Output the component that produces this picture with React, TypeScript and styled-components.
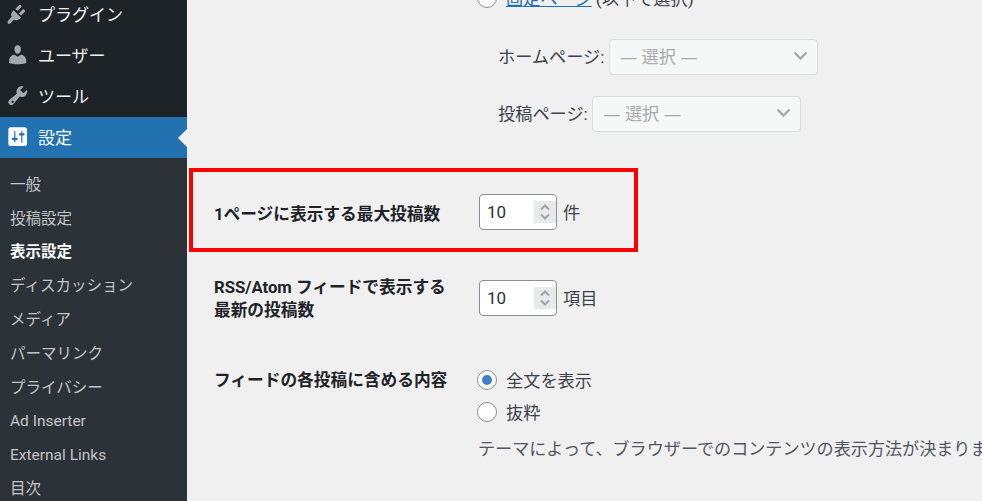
import React from 'react';
import styled, { createGlobalStyle } from 'styled-components';

const GlobalStyle = createGlobalStyle`
	html, body {
		margin: 0;
		height: 100%;
		overflow: hidden;
		background: #f0f0f1;
	}
	body {
		font-family: Roboto, 'Noto Sans CJK JP', sans-serif;
		font-size: 17.2px;
		color: #3c434a;
	}
`;

const Page = styled.div`
	display: flex;
	width: 982px;
	height: 501px;
	overflow: hidden;
`;

const Sidebar = styled.nav`
	flex: 0 0 187px;
	display: flex;
	flex-direction: column;
	background: #1d2327;
	overflow: hidden;
`;

const MenuItem = styled.div<{ $current?: boolean }>`
	position: relative;
	flex: 0 0 41px;
	display: flex;
	align-items: center;
	gap: 9px;
	padding-left: 5.5px;
	font-size: 17px;
	background: ${(p) => (p.$current ? '#2271b1' : 'transparent')};
	color: ${(p) => (p.$current ? '#fff' : '#f0f0f1')};
	&:first-child {
		margin-top: -6px;
	}
	${(p) =>
		p.$current &&
		`&::after {
			content: '';
			position: absolute;
			right: 0;
			top: 12px;
			border: 9px solid transparent;
			border-right-color: #f0f0f1;
			border-left-width: 0;
		}`}
`;

const MenuLabel = styled.span`
	position: relative;
	top: -1px;
`;

const MenuIcon = styled.svg<{ $current?: boolean }>`
	flex: 0 0 23.4px;
	width: 23.4px;
	height: 23.4px;
	margin-top: -2px;
	fill: ${(p) => (p.$current ? '#fff' : '#a7aaad')};
`;

const SubMenu = styled.div`
	flex: 1;
	display: flex;
	flex-direction: column;
	padding-top: 11px;
	background: #2c3338;
`;

const SubItem = styled.div<{ $current?: boolean }>`
	flex: 0 0 33.8px;
	box-sizing: border-box;
	display: flex;
	align-items: center;
	padding: 0 0 2px 10px;
	font-size: 15.5px;
	line-height: 20px;
	font-weight: ${(p) => (p.$current ? 700 : 400)};
	color: ${(p) => (p.$current ? '#fff' : '#c3c4c7')};
	white-space: nowrap;
`;

const Content = styled.main`
	flex: 1;
	min-width: 0;
	display: flex;
	flex-direction: column;
	padding: 0 0 0 27px;
	overflow: hidden;
`;

const FrontPageOptions = styled.div`
	padding-left: 263px;
`;

const RadioRow = styled.label<{ $clipped?: boolean }>`
	display: flex;
	align-items: center;
	gap: 9px;
	height: 32px;
	margin-top: ${(p) => (p.$clipped ? '-18px' : '0')};
	white-space: nowrap;
`;

const RadioText = styled.span`
	position: relative;
	top: -1px;
`;

const Radio = styled.span<{ $checked?: boolean }>`
	flex: 0 0 20px;
	height: 20px;
	box-sizing: border-box;
	border: 1px solid #8c8f94;
	border-radius: 50%;
	background: #fff;
	display: flex;
	align-items: center;
	justify-content: center;
	&::before {
		content: '';
		display: ${(p) => (p.$checked ? 'block' : 'none')};
		width: 10px;
		height: 10px;
		border-radius: 50%;
		background: #3f7fc1;
	}
`;

const Link = styled.a`
	color: #2271b1;
	text-decoration: underline;
`;

const PageSelects = styled.div`
	display: flex;
	flex-direction: column;
	gap: 21px;
	margin: 25px 0 0 21px;
`;

const SelectRow = styled.label`
	display: flex;
	align-items: center;
	height: 36px;
	white-space: nowrap;
`;

const SelectLabel = styled.span`
	position: relative;
	top: -2px;
	margin-right: 4.5px;
`;

const Select = styled.div`
	width: 209px;
	height: 36px;
	box-sizing: border-box;
	display: flex;
	align-items: center;
	justify-content: space-between;
	padding: 0 9px 3px 10px;
	font-family: 'Open Sans', 'Noto Sans CJK JP', sans-serif;
	background: #f6f7f7;
	border: 1px solid #dcdcde;
	border-radius: 4px;
	color: #a7aaad;
`;

const Chevron = styled.svg`
	width: 15px;
	height: 15px;
	fill: none;
	stroke: #a7aaad;
	stroke-width: 2.4;
`;

const SettingRow = styled.section<{ $marked?: boolean; $gap: number }>`
	position: relative;
	display: grid;
	grid-template-columns: 265px 1fr;
	align-items: start;
	margin-top: ${(p) => p.$gap}px;
	${(p) =>
		p.$marked &&
		`&::after {
			content: '';
			position: absolute;
			left: -25px;
			top: -26px;
			width: 449px;
			height: 84px;
			box-sizing: border-box;
			border: 4px solid #fe0000;
		}`}
`;

const RowLabel = styled.div<{ $shift: number }>`
	position: relative;
	top: ${(p) => p.$shift}px;
	font-size: 16.7px;
	font-weight: 700;
	color: #1d2327;
	line-height: 23px;
	white-space: nowrap;
`;

const Inline = styled.div`
	display: flex;
	align-items: center;
	gap: 6px;
`;

const Unit = styled.span`
	position: relative;
	top: -1px;
`;

const NumberBox = styled.div`
	position: relative;
	width: 78px;
	height: 36px;
	box-sizing: border-box;
	display: flex;
	align-items: center;
	padding-left: 7px;
	font-size: 17px;
	background: #fff;
	border: 1px solid #8c8f94;
	border-radius: 4px;
	color: #2c3338;
`;

const Spinner = styled.svg`
	position: absolute;
	right: 0;
	top: 6px;
	width: 22px;
	height: 22px;
	background: #e8e9ea;
	fill: none;
	stroke: #a0a3a7;
	stroke-width: 2;
`;

const Options = styled.div`
	display: flex;
	flex-direction: column;
	margin-left: -2px;
`;

const Hint = styled.p`
	margin: 7px 0 0 1px;
	font-size: 17.1px;
	white-space: nowrap;
	color: #50575e;
`;

function NumberField() {
	return (
		<NumberBox>
			10
			<Spinner viewBox="0 0 22 22">
				<path d="M7 8.500 11 4.500 15 8.500M7 13.500 11 17.500 15 13.500" />
			</Spinner>
		</NumberBox>
	);
}

function PageSelect({ label }: { label: string }) {
	return (
		<SelectRow>
			<SelectLabel>{label}</SelectLabel>
			<Select>
				— 選択 —
				<Chevron viewBox="0 0 15 15">
					<path d="M1.500 4.500 7.500 10.500 13.500 4.500" />
				</Chevron>
			</Select>
		</SelectRow>
	);
}

export default function App() {
	return (
		<>
			<GlobalStyle />
			<Page>
				<Sidebar>
					<MenuItem>
						<MenuIcon viewBox="0 0 20 20">
							<path d="M13.110 4.360 9.870 7.600 8 5.730l3.240-3.240c.35-.34 1.050-.25 1.540.24.49.49.58 1.190.33 1.630zM16.110 8.360 12.870 11.600 11 9.730l3.240-3.240c.35-.34 1.050-.25 1.540.24.49.49.58 1.190.33 1.630zM6.500 7l6.500 6.500c-2 2-4.500 2.800-6.200 1.600L3.500 18.500h-2v-2l3.400-3.800C3.700 11 4.500 9 6.500 7z" />
						</MenuIcon>
						<MenuLabel>プラグイン</MenuLabel>
					</MenuItem>
					<MenuItem>
						<MenuIcon viewBox="0 0 20 20">
							<path d="M10 9.250c-2.270 0-2.730-3.440-2.730-3.440C7 4.020 7.820 2 9.970 2c2.160 0 2.980 2.020 2.710 3.810 0 0-.41 3.440-2.680 3.440zm0 2.570L12.720 10c2.390 0 4.520 2.330 4.520 4.530v2.490s-3.650 1.130-7.240 1.130c-3.650 0-7.240-1.130-7.240-1.130v-2.490c0-2.250 1.940-4.480 4.470-4.480z" />
						</MenuIcon>
						<MenuLabel>ユーザー</MenuLabel>
					</MenuItem>
					<MenuItem>
						<MenuIcon viewBox="0 0 20 20">
							<path d="M16.680 9.770c-1.340 1.340-3.300 1.670-4.950.99l-5.410 6.520c-.99.99-2.590.99-3.570 0-.99-.98-.99-2.580 0-3.570l6.520-5.420c-.68-1.650-.35-3.610.99-4.950 1.280-1.280 3.120-1.620 4.720-1.060l-2.890 2.890 2.820 2.820 2.890-2.890c.56 1.600.22 3.440-1.060 4.720zm-9.930 5.470c0-.55-.45-1-1-1s-1 .45-1 1 .45 1 1 1 1-.45 1-1z" />
						</MenuIcon>
						<MenuLabel>ツール</MenuLabel>
					</MenuItem>
					<MenuItem $current>
						<MenuIcon $current viewBox="0 0 20 20">
							<path d="M18 16V4c0-1.100-.9-2-2-2H4c-1.100 0-2 .9-2 2v12c0 1.100.9 2 2 2h12c1.100 0 2-.9 2-2zM8 11h1c.55 0 1 .45 1 1s-.45 1-1 1H8v1.500c0 .28-.22.5-.5.5s-.5-.22-.5-.5V13H6c-.55 0-1-.45-1-1s.45-1 1-1h1V5.500c0-.28.22-.5.5-.5s.5.22.5.5V11zm5-2h-1c-.55 0-1-.45-1-1s.45-1 1-1h1V5.500c0-.28.22-.5.5-.5s.5.22.5.5V7h1c.55 0 1 .45 1 1s-.45 1-1 1h-1v5.500c0 .28-.22.5-.5.5s-.5-.22-.5-.5V9z" />
						</MenuIcon>
						<MenuLabel>設定</MenuLabel>
					</MenuItem>
					<SubMenu>
						<SubItem>一般</SubItem>
						<SubItem>投稿設定</SubItem>
						<SubItem $current>表示設定</SubItem>
						<SubItem>ディスカッション</SubItem>
						<SubItem>メディア</SubItem>
						<SubItem>パーマリンク</SubItem>
						<SubItem>プライバシー</SubItem>
						<SubItem>Ad Inserter</SubItem>
						<SubItem>External Links</SubItem>
						<SubItem>目次</SubItem>
					</SubMenu>
				</Sidebar>
				<Content>
					<FrontPageOptions>
						<RadioRow $clipped>
							<Radio />
							<RadioText>
								<Link>固定ページ</Link> (以下で選択)
							</RadioText>
						</RadioRow>
						<PageSelects>
							<PageSelect label="ホームページ:" />
							<PageSelect label="投稿ページ:" />
						</PageSelects>
					</FrontPageOptions>
					<SettingRow $marked $gap={62}>
						<RowLabel $shift={9}>1ページに表示する最大投稿数</RowLabel>
						<Inline>
							<NumberField />
							<Unit>件</Unit>
						</Inline>
					</SettingRow>
					<SettingRow $gap={50}>
						<RowLabel $shift={-4}>
							RSS/Atom フィードで表示する
							<br />
							最新の投稿数
						</RowLabel>
						<Inline>
							<NumberField />
							<Unit>項目</Unit>
						</Inline>
					</SettingRow>
					<SettingRow $gap={38}>
						<RowLabel $shift={5}>フィードの各投稿に含める内容</RowLabel>
						<Options>
							<RadioRow>
								<Radio $checked />
								<RadioText>全文を表示</RadioText>
							</RadioRow>
							<RadioRow>
								<Radio />
								<RadioText>抜粋</RadioText>
							</RadioRow>
							<Hint>テーマによって、ブラウザーでのコンテンツの表示方法が決まります。</Hint>
						</Options>
					</SettingRow>
				</Content>
			</Page>
		</>
	);
}
